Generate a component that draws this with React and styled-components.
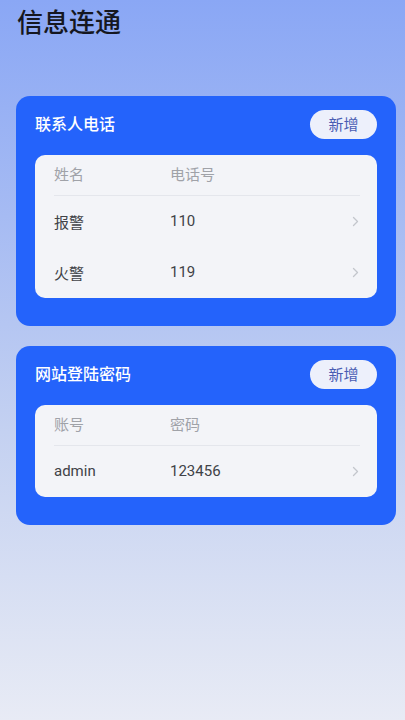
import React from "react";
import styled, { createGlobalStyle } from "styled-components";

const Global = createGlobalStyle`
  html, body { margin: 0; padding: 0; }
  body {
    font-family: Roboto, "Noto Sans CJK SC", sans-serif;
    background: #e8ebf5;
  }
  * { box-sizing: border-box; }
`;

const Page = styled.div`
  min-height: 720px;
  width: 405px;
  background: linear-gradient(180deg, #8aa7f5 0%, #a6bbf3 30%, #c4d1f1 60%, #e8ebf5 100%);
  padding: 8px 9px 40px 16px;
  display: flex;
  flex-direction: column;
`;

const Title = styled.h1`
  margin: 0 0 62px 1px;
  font-size: 26px;
  line-height: 26px;
  font-weight: 500;
  color: #151720;
  font-family: "Noto Sans CJK SC", sans-serif;
`;

const Card = styled.section`
  background: #2463fb;
  border-radius: 14px;
  padding: 14px 19px 28px;
  margin-bottom: 20px;
`;

const CardHeader = styled.div`
  display: flex;
  align-items: center;
  justify-content: space-between;
  margin-bottom: 16px;
`;

const CardTitle = styled.span`
  color: #ffffff;
  font-size: 16px;
  line-height: 16px;
  margin-top: -3px;
  font-weight: 500;
  font-family: "Noto Sans CJK SC", sans-serif;
`;

const AddButton = styled.button`
  border: none;
  height: 29px;
  width: 67px;
  border-radius: 15px;
  background: #edf0fb;
  color: #4a5db3;
  font-size: 15px;
  line-height: 15px;
  font-family: "Noto Sans CJK SC", sans-serif;
  padding: 0 0 2px;
  display: flex;
  align-items: center;
  justify-content: center;
`;

const Panel = styled.div`
  background: #f3f4f8;
  border-radius: 10px;
  padding: 0 17px 0 19px;
`;

const Row = styled.div`
  display: grid;
  grid-template-columns: 116px 1fr 8px;
  align-items: center;
  height: ${(p) => (p.$head ? "41px" : "51px")};
  padding-bottom: ${(p) => (p.$head ? "3px" : "1px")};
  border-bottom: ${(p) => (p.$head ? "1px solid #e4e6ec" : "none")};
  color: ${(p) => (p.$head ? "#a0a2a8" : "#404247")};
  font-size: 15px;
  font-family: Roboto, "Noto Sans CJK SC", sans-serif;
`;

const Chevron = () => (
  <svg width="7" height="11" viewBox="0 0 7 11" fill="none">
    <path d="M1.5 1.5 L5.5 5.5 L1.5 9.5" stroke="#c3c6cc" strokeWidth="1.3" strokeLinecap="round" strokeLinejoin="round" />
  </svg>
);

const sections = [
  {
    title: "联系人电话",
    head: ["姓名", "电话号"],
    rows: [["报警", "110"], ["火警", "119"]],
  },
  {
    title: "网站登陆密码",
    head: ["账号", "密码"],
    rows: [["admin", "123456"]],
  },
];

export default function App() {
  return (
    <>
      <Global />
      <Page>
        <Title>信息连通</Title>
        {sections.map((s) => (
          <Card key={s.title}>
            <CardHeader>
              <CardTitle>{s.title}</CardTitle>
              <AddButton>新增</AddButton>
            </CardHeader>
            <Panel>
              <Row $head>
                <span>{s.head[0]}</span>
                <span>{s.head[1]}</span>
                <span />
              </Row>
              {s.rows.map((r) => (
                <Row key={r[0]}>
                  <span>{r[0]}</span>
                  <span>{r[1]}</span>
                  <Chevron />
                </Row>
              ))}
            </Panel>
          </Card>
        ))}
      </Page>
    </>
  );
}
